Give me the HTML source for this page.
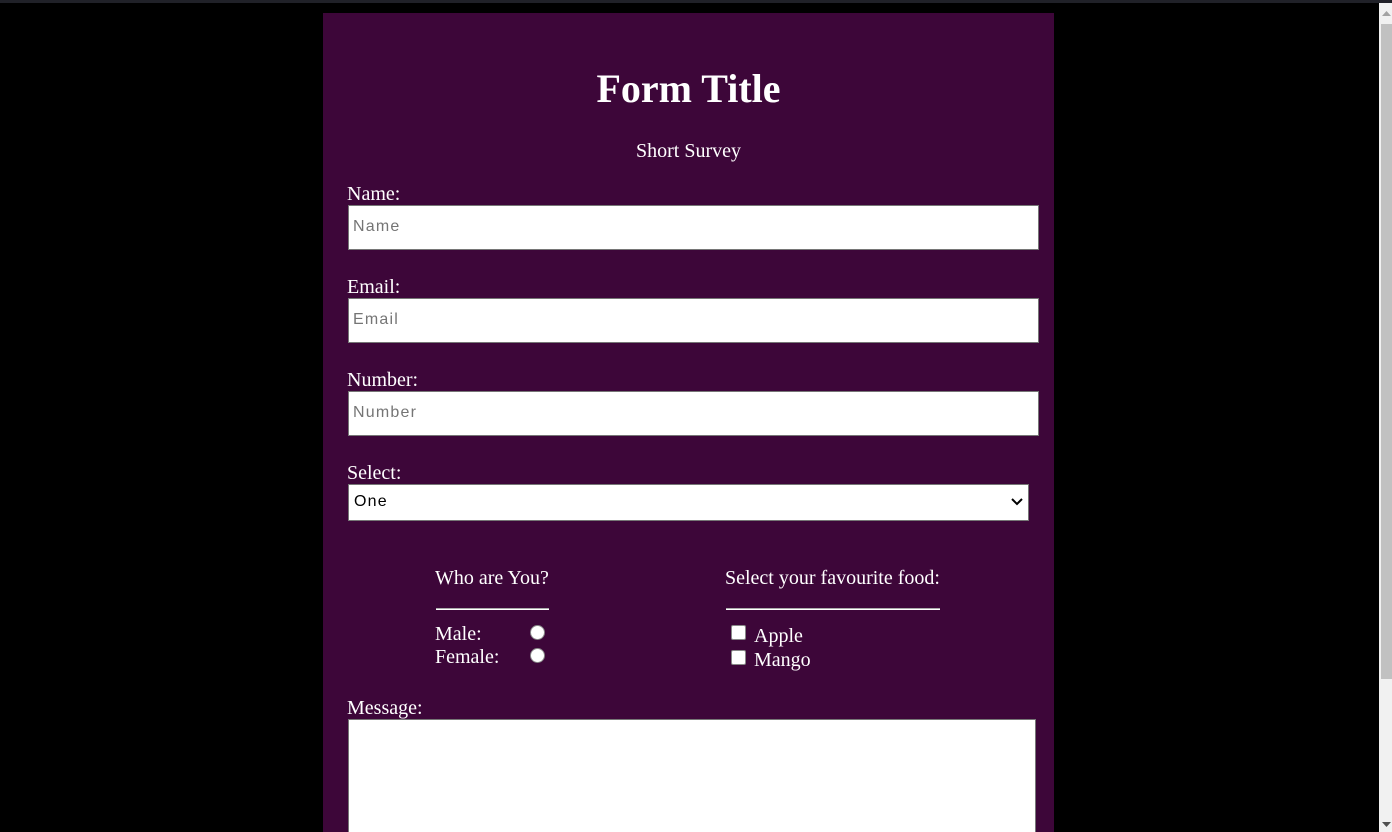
<!DOCTYPE html>
<html><head><meta charset="utf-8"><style>
*{margin:0;padding:0;box-sizing:border-box}
html,body{width:1392px;height:832px;overflow:hidden}
body{background:#000;position:relative;font-family:"Liberation Serif",serif;color:#fff}
.a{position:absolute;white-space:nowrap}
.top{left:0;top:0;width:1392px;height:3px;background:#202128}
.panel{left:323px;top:13px;width:731px;height:819px;background:#3d0639}
.lbl{font-size:20px;line-height:22px}
.inp{background:#fff;border:1px solid #767676;color:#757575;font-family:"Liberation Sans",sans-serif;font-size:16px;letter-spacing:1.2px;padding-left:4px}
.hr{height:2px;border-top:1px solid #aaa;border-bottom:1px solid #fff;background:#ddd}
.radio{width:15px;height:15px;border-radius:50%;background:#fff;border:1px solid #888}
.cb{width:15px;height:15px;border-radius:2px;background:#fff;border:1px solid #888}
</style></head><body>
<div class="a top"></div>
<div class="a panel"></div>
<div class="a" style="left:323px;width:731px;top:67px;text-align:center;font-weight:bold;font-size:40px;line-height:44px">Form Title</div>
<div class="a" style="left:323px;width:731px;top:140px;text-align:center;font-size:20px;line-height:22px">Short Survey</div>

<div class="a lbl" style="left:347px;top:183px">Name:</div>
<div class="a inp" style="left:348px;top:205px;width:691px;height:45px;line-height:42px">Name</div>
<div class="a lbl" style="left:347px;top:276px">Email:</div>
<div class="a inp" style="left:348px;top:298px;width:691px;height:45px;line-height:42px">Email</div>
<div class="a lbl" style="left:347px;top:369px">Number:</div>
<div class="a inp" style="left:348px;top:391px;width:691px;height:45px;line-height:42px">Number</div>
<div class="a lbl" style="left:347px;top:462px">Select:</div>
<div class="a inp" style="left:348px;top:484px;width:681px;height:37px;line-height:34px;color:#000;padding-left:5px">One</div>
<svg class="a" style="left:1010px;top:496px" width="14" height="12" viewBox="0 0 14 12"><path d="M2 3 L7 8 L12 3" fill="none" stroke="#000" stroke-width="2"/></svg>

<div class="a lbl" style="left:435px;top:567px">Who are You?</div>
<div class="a hr" style="left:436px;top:608px;width:113px"></div>
<div class="a lbl" style="left:435px;top:623px">Male:</div>
<div class="a radio" style="left:530px;top:625px"></div>
<div class="a lbl" style="left:435px;top:646px">Female:</div>
<div class="a radio" style="left:530px;top:648px"></div>

<div class="a lbl" style="left:725px;top:567px">Select your favourite food:</div>
<div class="a hr" style="left:726px;top:608px;width:214px"></div>
<div class="a cb" style="left:731px;top:625px"></div>
<div class="a lbl" style="left:754px;top:625px">Apple</div>
<div class="a cb" style="left:731px;top:650px"></div>
<div class="a lbl" style="left:754px;top:649px">Mango</div>

<div class="a lbl" style="left:347px;top:697px">Message:</div>
<div class="a" style="left:348px;top:719px;width:688px;height:113px;background:#fff;border:1px solid #767676;border-bottom:none"></div>

<div class="a" style="left:1379px;top:3px;width:13px;height:829px;background:#f1f1f1"></div>
<div class="a" style="left:1381px;top:24px;width:11px;height:655px;background:#c1c1c1"></div>
<svg class="a" style="left:1382px;top:10px" width="9" height="6"><path d="M0 6 L4.5 1 L9 6Z" fill="#a3a3a3"/></svg>
<svg class="a" style="left:1382px;top:822px" width="9" height="6"><path d="M0 0 L4.5 5 L9 0Z" fill="#505050"/></svg>
</body></html>
